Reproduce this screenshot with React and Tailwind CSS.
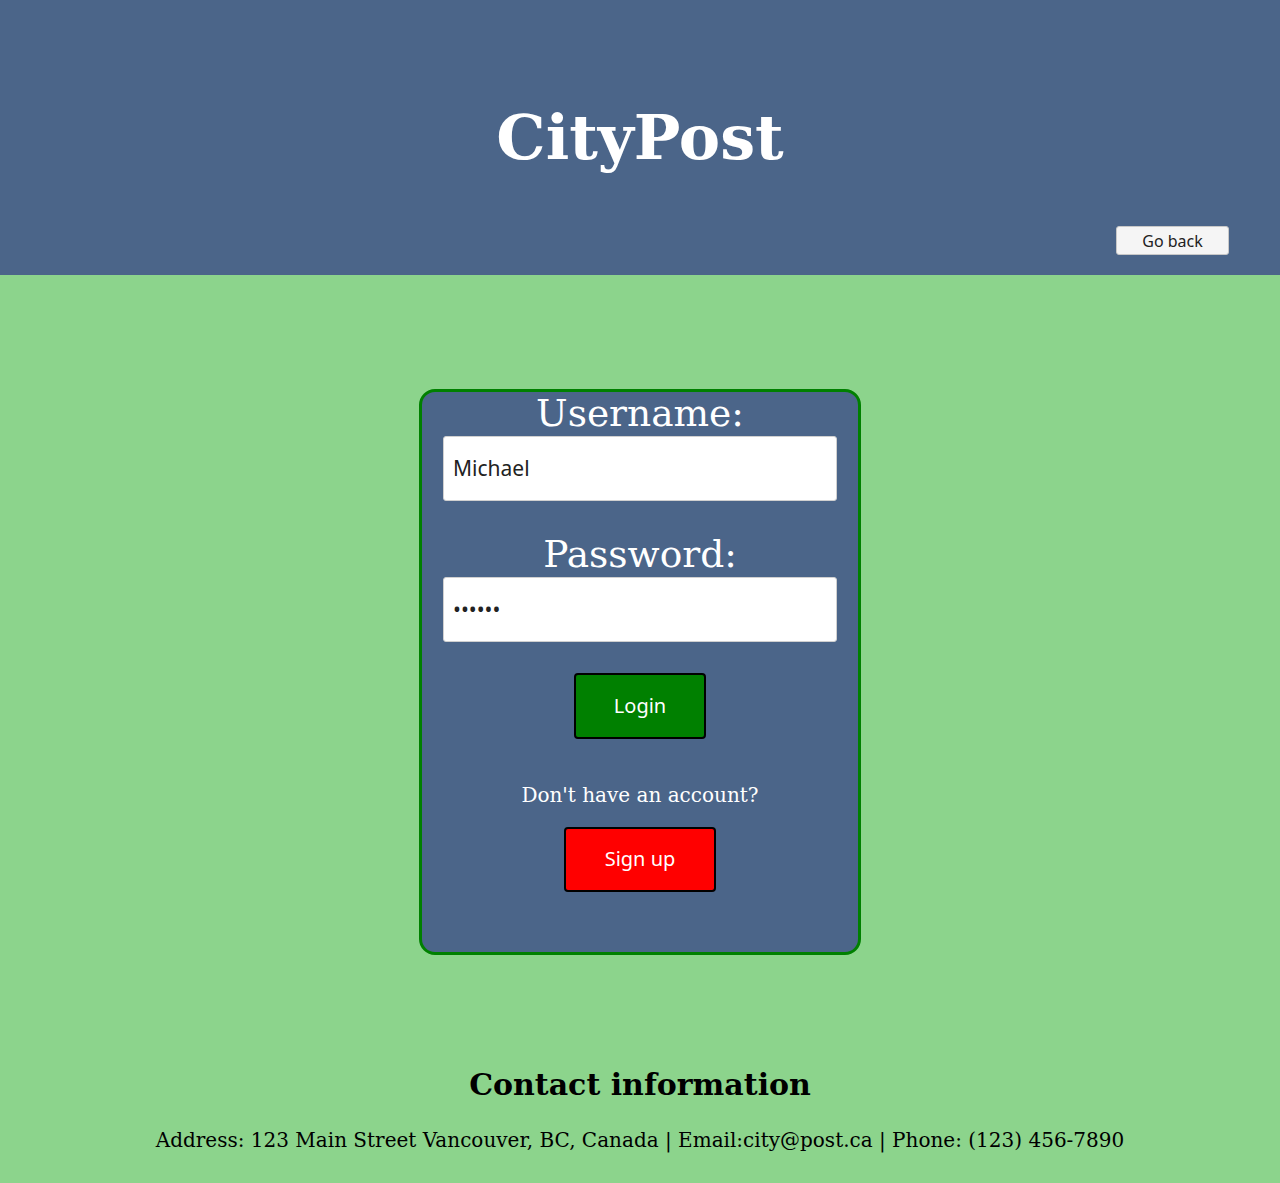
import React from 'react';

const serif = { fontFamily: '"DejaVu Serif", serif' };

export default function App() {
  return (
    <div className="min-h-[1183px] bg-[#8cd48c] flex flex-col" style={serif}>
      {/* Header */}
      <header className="bg-[#4b6589] h-[275px] flex flex-col items-center">
        <h1 className="text-white text-[62px] font-bold leading-none mt-[107px]">CityPost</h1>
        <div className="w-full flex justify-end pr-[51px] mt-[57px]">
          <button className="w-[113px] h-[29px] bg-[#f5f5f5] border border-[#c8c8c8] rounded-[3px] text-[16px] text-[#222] font-['Noto_Sans',sans-serif]">
            Go back
          </button>
        </div>
      </header>

      {/* Login card */}
      <main className="flex justify-center pt-[114px]">
        <div className="w-[442px] h-[566px] bg-[#4b6589] border-[3px] border-[#008000] rounded-[16px] flex flex-col items-center">
          <label className="text-white text-[37.5px] leading-none mt-[3px]">Username:</label>
          <input
            readOnly
            value="Michael"
            className="mt-[3px] w-[394px] h-[65px] bg-white border border-[#d0d0d0] rounded-[3px] px-[9px] text-[21px] text-[#222] font-['Noto_Sans',sans-serif] outline-none"
          />
          <label className="text-white text-[37.5px] leading-none mt-[35.5px]">Password:</label>
          <input
            readOnly
            type="password"
            value="123456"
            className="mt-[3px] w-[394px] h-[65px] bg-white border border-[#d0d0d0] rounded-[3px] px-[9px] text-[21px] text-[#222] font-['Noto_Sans',sans-serif] outline-none"
          />
          <button className="mt-[31px] w-[132px] h-[66px] bg-[#008000] border-2 border-black rounded-[4px] text-white text-[20px] font-['Noto_Sans',sans-serif]">
            Login
          </button>
          <p className="text-white text-[20px] mt-[46px] leading-none">Don't have an account?</p>
          <button className="mt-[22px] w-[152px] h-[65px] bg-[#ff0000] border-2 border-black rounded-[4px] text-white text-[20px] font-['Noto_Sans',sans-serif]">
            Sign up
          </button>
        </div>
      </main>

      {/* Footer */}
      <footer className="flex flex-col items-center mt-[115px]">
        <h2 className="text-black text-[30px] font-bold leading-none">Contact information</h2>
        <p className="text-black text-[20px] mt-[30px] leading-none">
          Address: 123 Main Street Vancouver, BC, Canada | Email:city@post.ca | Phone: (123) 456-7890
        </p>
      </footer>
    </div>
  );
}
